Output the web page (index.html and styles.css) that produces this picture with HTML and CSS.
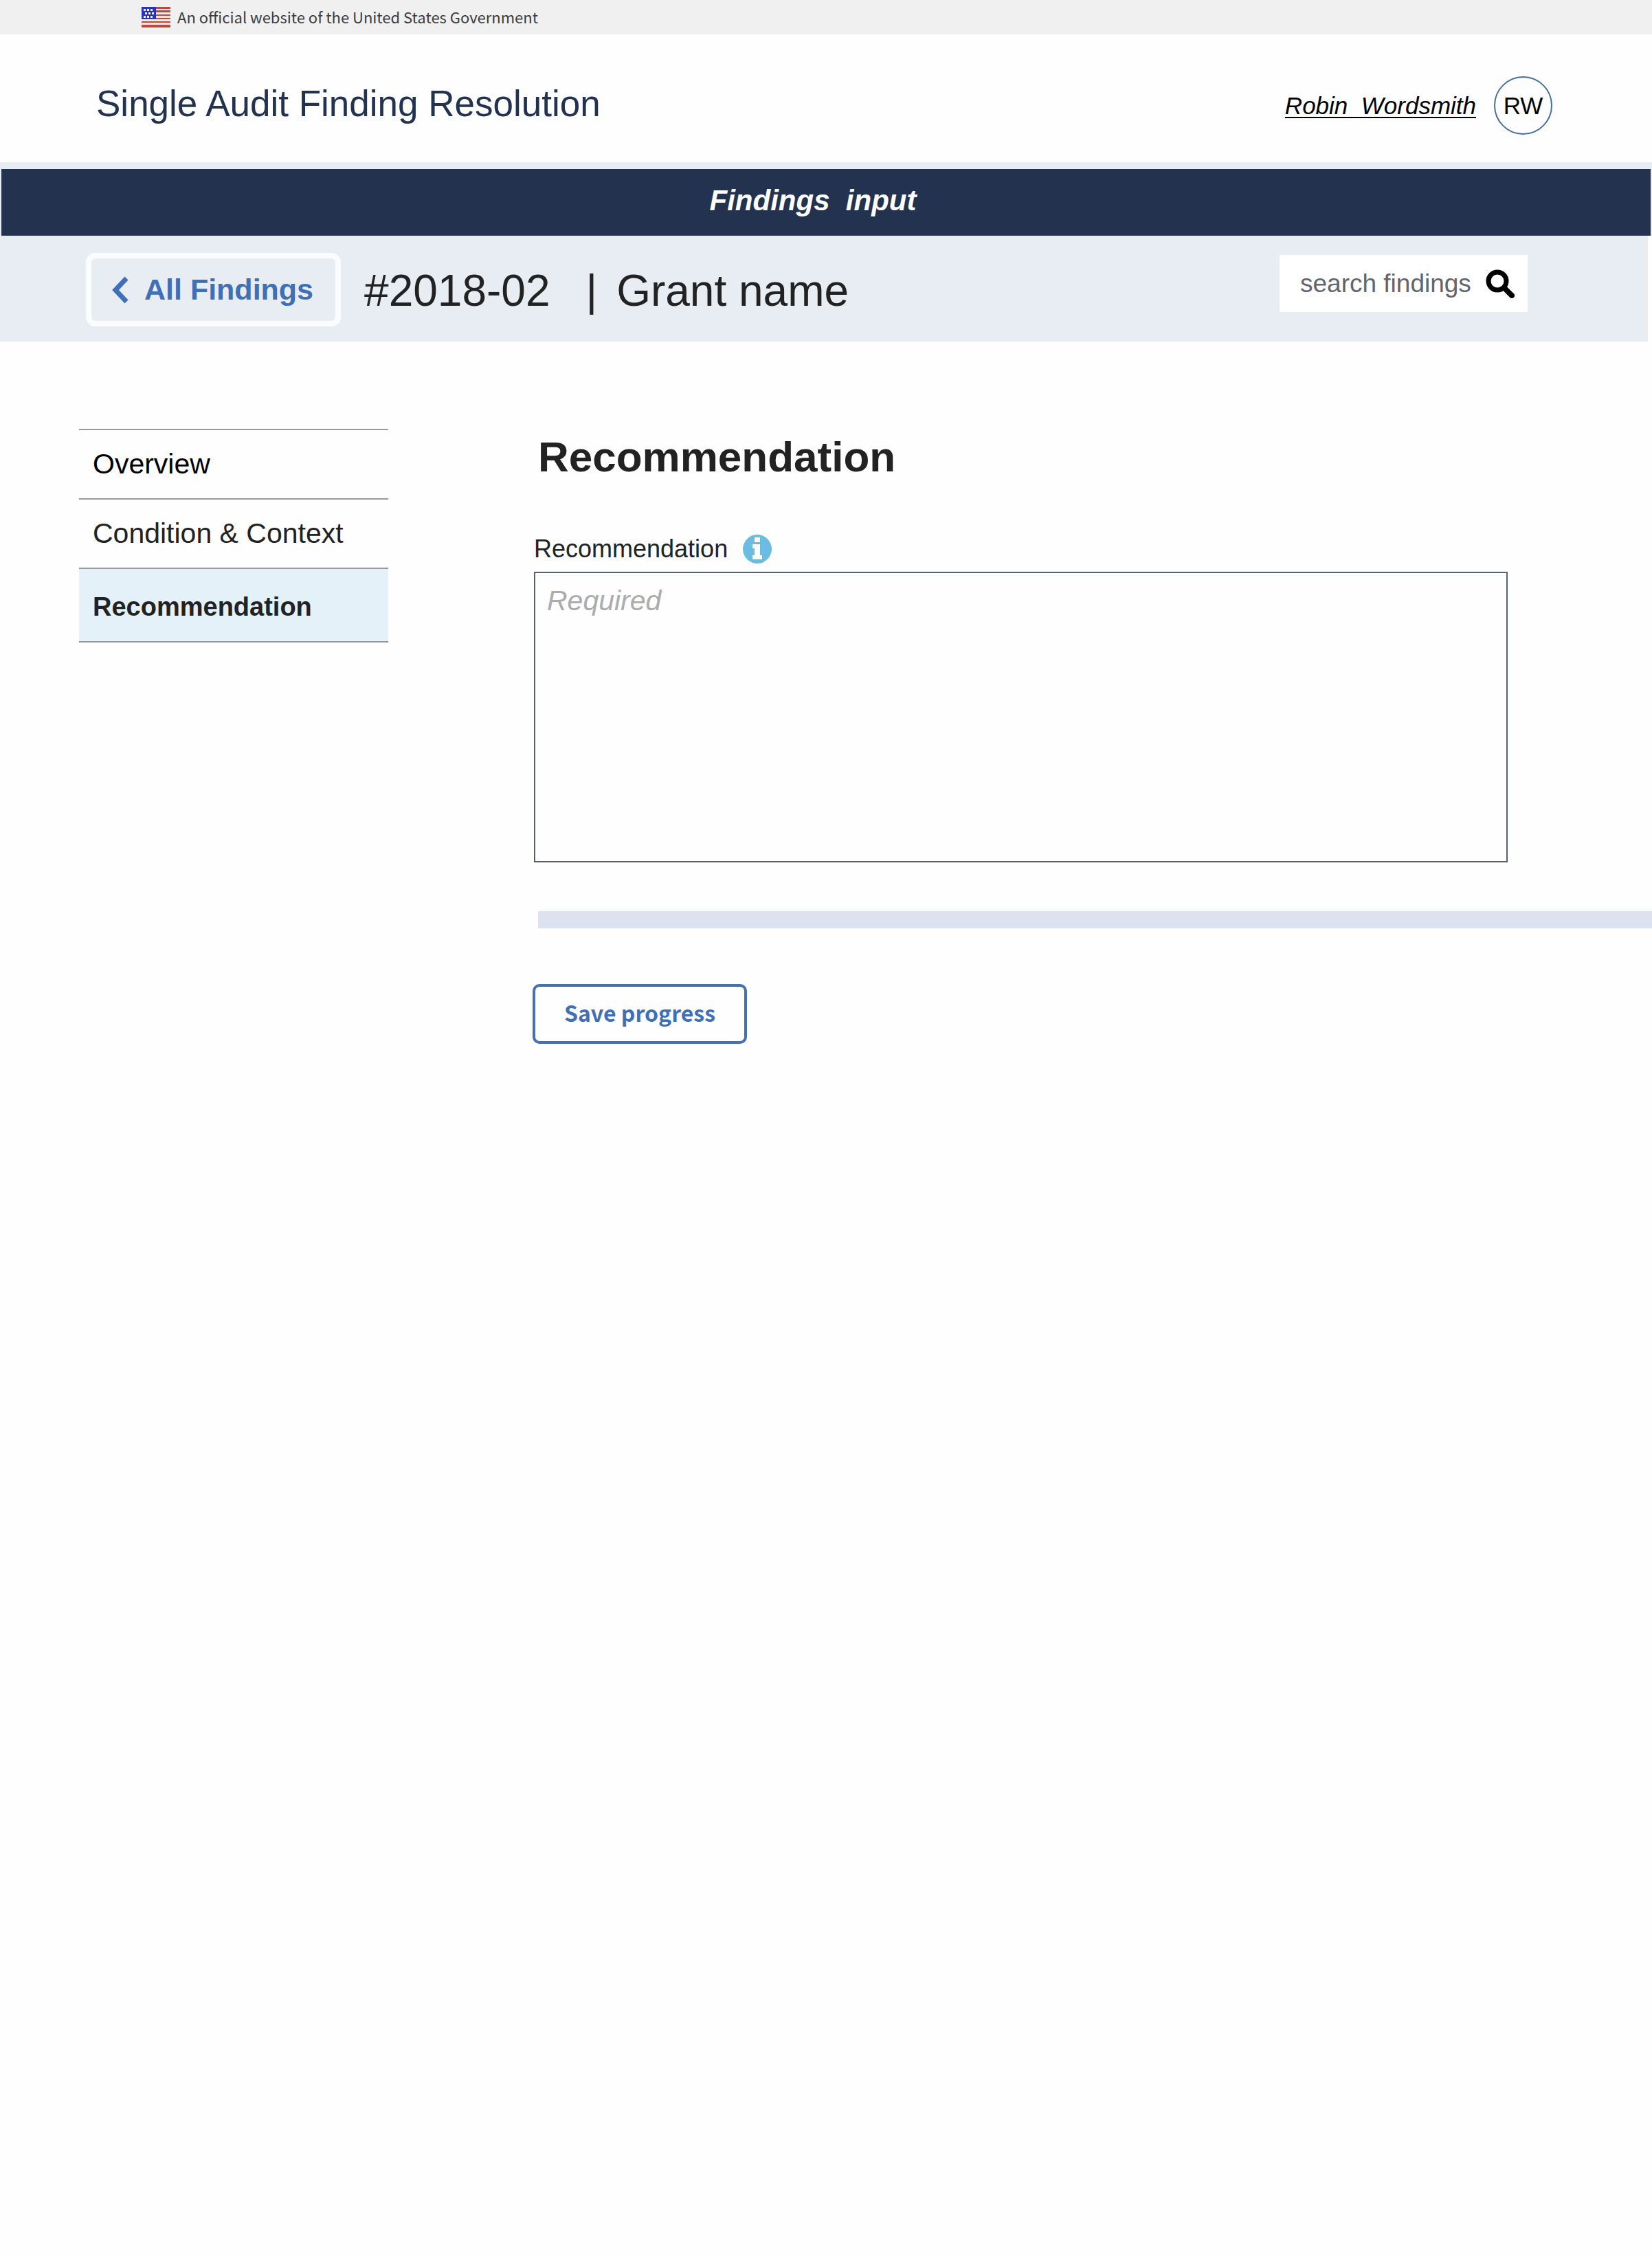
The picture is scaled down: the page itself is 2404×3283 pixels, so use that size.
FILE: index.html
```html
<!DOCTYPE html>
<html lang="en">
<head>
<meta charset="utf-8">
<title>Single Audit Finding Resolution</title>
<link rel="stylesheet" href="styles.css">
</head>
<body>
<div class="gov-banner">
  <svg class="flag" viewBox="0 0 42 30" aria-hidden="true">
    <rect width="42" height="30" fill="#f3e9e6"/>
    <path fill="#bf4a3c" d="M0 0h42v3H0zM0 5h42v3H0zM0 11h42v2H0zM0 16h42v2H0zM0 21h42v2H0zM0 26h42v4H0z"/>
    <rect y="18" width="42" height="3" fill="#f3e9e6"/>
    <rect width="21" height="18" fill="#2a34b4"/>
    <path fill="#f4f4ff" d="M3 3h3v3H3zM8 3h3v3H8zM13 3h3v3h-3zM5 8h3v3H5zM10 8h3v3h-3zM15 8h3v3h-3zM3 13h3v3H3zM8 13h3v3H8zM13 13h3v3h-3z"/>
  </svg>
  <span class="gov-text">An official website of the United States Government</span>
</div>

<header class="site-header">
  <div class="site-title">Single Audit Finding Resolution</div>
  <div class="user">
    <a class="user-name" href="#profile">Robin&nbsp; Wordsmith</a>
    <span class="avatar">RW</span>
  </div>
</header>

<div class="section-wrap">
  <div class="section-bar">Findings&nbsp; input</div>
</div>

<div class="finding-bar">
  <button class="back" type="button">
    <svg class="chevron" viewBox="0 0 24 40" aria-hidden="true"><path d="M21 3L5 20l16 17" fill="none" stroke="currentColor" stroke-width="7"/></svg>
    All Findings
  </button>
  <div class="finding-title">
    <span>#2018-02</span>
    <span class="divider">|</span>
    <span>Grant name</span>
  </div>
  <form class="search">
    <input class="search-input" type="text" placeholder="search findings" aria-label="search findings">
    <button class="search-button" type="button" aria-label="Search">
      <svg class="search-icon" viewBox="0 0 42 42" aria-hidden="true"><circle cx="17" cy="17" r="13" fill="none" stroke="#000" stroke-width="7"/><path d="M27 27l11 11" stroke="#000" stroke-width="8" stroke-linecap="round"/></svg>
    </button>
  </form>
</div>

<main class="layout">
  <nav class="side-nav">
    <a class="nav-item nav-first" href="#overview">Overview</a>
    <a class="nav-item" href="#condition">Condition &amp; Context</a>
    <a class="nav-item nav-active" href="#recommendation" aria-current="page">Recommendation</a>
  </nav>
  <section class="content">
    <h1 class="heading">Recommendation</h1>
    <div class="field">
      <div class="field-head">
        <label for="rec">Recommendation</label>
        <svg class="info" viewBox="0 0 42 42" aria-hidden="true"><circle cx="21" cy="21" r="21" fill="#6bbce2"/><path fill="#fff" d="M17 4h8v7h-8zM14 14h11v16h3v6H14v-6h3V20h-3z"/></svg>
      </div>
      <textarea id="rec" class="field-input" placeholder="Required"></textarea>
    </div>
    <hr class="rule">
    <button class="save" type="button">Save progress</button>
  </section>
</main>
</body>
</html>
```
FILE: styles.css
```css
* {
  box-sizing: border-box;
}

body {
  margin: 0;
  min-height: 100vh;
  background: #fefefe;
  color: #222;
  font-family: "Liberation Sans", Arial, sans-serif;
  font-size: 36px;
}

button,
input,
textarea {
  font-family: inherit;
  margin: 0;
}

.gov-banner {
  display: flex;
  align-items: center;
  gap: 10px;
  height: 50px;
  padding-left: 206px;
  background: #f0f0f0;
}

.flag {
  width: 42px;
  height: 30px;
}

.gov-text {
  padding-bottom: 2px;
  color: #3a3c43;
  font-family: "Noto Sans CJK JP", sans-serif;
  font-size: 22px;
  line-height: 36px;
}

.site-header {
  display: flex;
  align-items: center;
  justify-content: space-between;
  padding: 61px 145px 40px 140px;
}

.site-title {
  padding-bottom: 6px;
  color: #22324f;
  font-size: 53px;
  line-height: 64px;
}

.user {
  display: flex;
  align-items: center;
  gap: 26px;
}

.user-name {
  color: #000;
  font-size: 35px;
  font-style: italic;
  text-decoration-thickness: 2px;
  text-underline-offset: 4px;
}

.avatar {
  width: 85px;
  height: 85px;
  border: 2px solid #456f9f;
  border-radius: 50%;
  color: #000;
  font-size: 35px;
  line-height: 81px;
  text-align: center;
}

.section-wrap {
  padding: 10px 2px 0;
  background: #e8ecf3;
}

.section-bar {
  padding: 0 38px 6px 0;
  background: #22324f;
  color: #fff;
  font-size: 42px;
  font-style: italic;
  font-weight: bold;
  line-height: 91px;
  text-align: center;
}

.finding-bar {
  display: flex;
  align-items: flex-start;
  margin-right: 6px;
  padding: 25px 175px 20px 125px;
  background: #e8ecf3;
}

.back {
  display: flex;
  align-items: center;
  gap: 23px;
  height: 107px;
  padding: 0 32px 0 30px;
  border: 8px solid #fbfcfe;
  border-radius: 14px;
  background: none;
  color: #3f6fb6;
  font-size: 43px;
  font-weight: bold;
}

.chevron {
  width: 24px;
  height: 40px;
}

.finding-title {
  display: flex;
  gap: 28px;
  margin-left: 34px;
  padding-top: 2px;
  font-size: 64px;
  line-height: 107px;
}

.divider {
  padding-left: 24px;
}

.search {
  display: flex;
  align-items: center;
  width: 361px;
  height: 83px;
  margin: 3px 0 0 auto;
  padding: 0 19px 0 30px;
  background: #fff;
}

.search-input {
  flex: 1;
  min-width: 0;
  height: 83px;
  padding: 0;
  border: 0;
  background: none;
  font-size: 37px;
}

.search-input::placeholder {
  color: #62656d;
}

.search-button {
  display: flex;
  padding: 0;
  border: 0;
  background: none;
}

.search-icon {
  width: 42px;
  height: 42px;
}

.layout {
  display: grid;
  grid-template-columns: 450px 1fr;
  gap: 212px;
  align-items: start;
  padding: 127px 0 80px 115px;
}

.nav-item {
  display: block;
  padding-left: 20px;
  border-bottom: 2px solid #999;
  color: #222;
  font-size: 41px;
  line-height: 99px;
  text-decoration: none;
}

.nav-first {
  border-top: 2px solid #999;
  color: #000;
}

.nav-active {
  padding-top: 6px;
  background: #e5f1f8;
  font-size: 38px;
  font-weight: bold;
}

.heading {
  margin: 5px 0 77px;
  padding-left: 6px;
  font-size: 62px;
  line-height: 72px;
}

.field {
  padding-right: 210px;
}

.field-head {
  display: flex;
  align-items: center;
  gap: 22px;
  height: 42px;
  margin-bottom: 12px;
}

.info {
  width: 42px;
  height: 42px;
}

.field-input {
  display: block;
  width: 100%;
  height: 423px;
  padding: 16px 17px;
  border: 2px solid #5b616b;
  border-radius: 0;
  background: none;
  font-size: 41px;
  line-height: 48px;
  resize: none;
}

.field-input::placeholder {
  color: #acacac;
  font-style: italic;
}

.rule {
  height: 25px;
  margin: 71px 0 81px 6px;
  border: 0;
  background: #dce2ef;
}

.save {
  display: block;
  width: 312px;
  height: 87px;
  margin-left: -2px;
  padding: 0 0 6px;
  border: 4px solid #4371b2;
  border-radius: 10px;
  background: none;
  color: #3f6fb6;
  font-family: "Noto Sans CJK JP", sans-serif;
  font-size: 32px;
  font-weight: bold;
}
```
